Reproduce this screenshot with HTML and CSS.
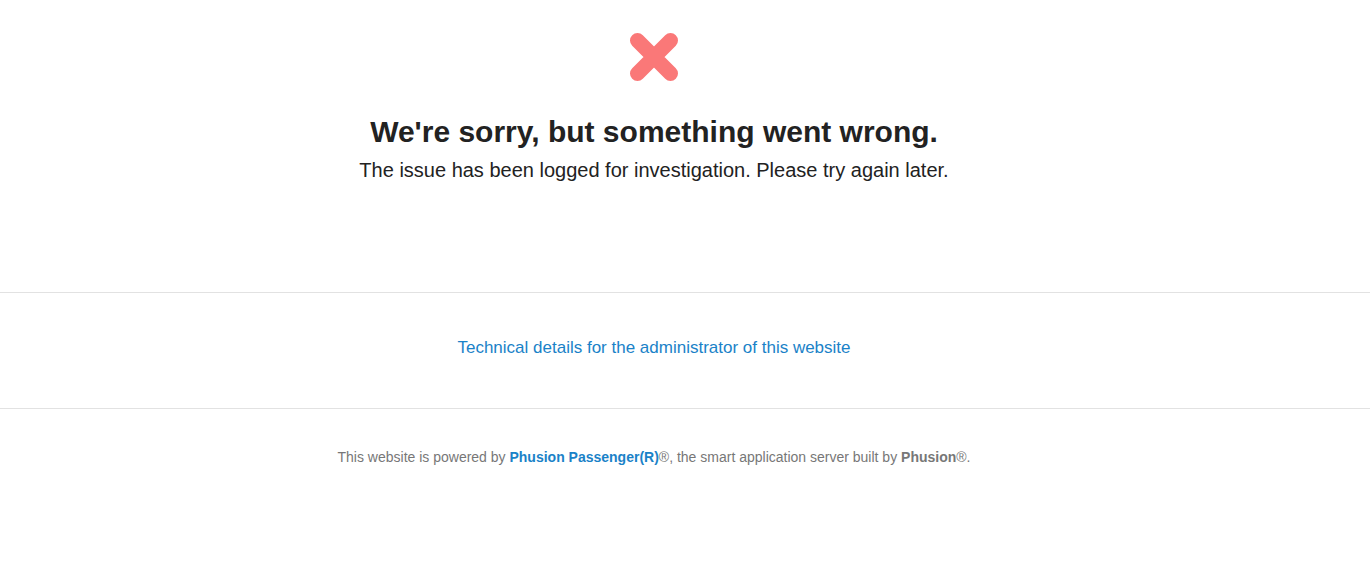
FILE: index.html
```html
<!DOCTYPE html>
<html>
<head>
<meta charset="utf-8">
<title>We're sorry, but something went wrong</title>
<link rel="stylesheet" href="styles.css">
</head>
<body>
<div class="top">
  <div class="inner">
    <svg class="icon" width="52" height="52" viewBox="0 0 52 52">
      <path d="M9.5 9.5 L42.5 42.5 M42.5 9.5 L9.5 42.5" stroke="#fa7878" stroke-width="15" stroke-linecap="round" stroke-linejoin="round"/>
    </svg>
    <h1 class="title">We're sorry, but something went wrong.</h1>
    <p class="sub">The issue has been logged for investigation. Please try again later.</p>
  </div>
</div>
<div class="details">
  <div class="inner">
    <p class="linkline"><a class="link" href="#">Technical details for the administrator of this website</a></p>
  </div>
</div>
<div class="footer">
  <div class="inner">
    <p class="powered">This website is powered by <a class="brand" href="#">Phusion Passenger(R)</a>®, the smart application server built by <b class="phusion">Phusion</b>®.</p>
  </div>
</div>
</body>
</html>
```
FILE: styles.css
```css
html, body {
  margin: 0;
  padding: 0;
  background: #fff;
  font-family: "Liberation Sans", Arial, sans-serif;
  color: #222;
}
.inner {
  width: 1308px;
  text-align: center;
}
.top {
  padding-top: 31px;
  height: 292px;
  box-sizing: border-box;
}
.icon {
  display: block;
  margin: 0 auto;
}
.title {
  margin: 32px 0 0;
  font-size: 30px;
  line-height: 34px;
  font-weight: bold;
  color: #222;
}
.sub {
  margin: 9px 0 0;
  font-size: 20px;
  line-height: 24px;
  color: #222;
}
.details {
  border-top: 1px solid #e2e2e2;
  height: 116px;
  box-sizing: border-box;
  padding-top: 45px;
}
.linkline {
  margin: 0;
  font-size: 17px;
  line-height: 20px;
}
.link {
  color: #1a82c8;
  text-decoration: none;
}
.footer {
  border-top: 1px solid #e2e2e2;
  padding-top: 39px;
  height: 169px;
  box-sizing: border-box;
}
.powered {
  margin: 0;
  font-size: 14px;
  line-height: 18px;
  color: #777;
}
.brand {
  color: #1a82c8;
  font-weight: bold;
  text-decoration: none;
}
.phusion {
  color: #777;
}
```
